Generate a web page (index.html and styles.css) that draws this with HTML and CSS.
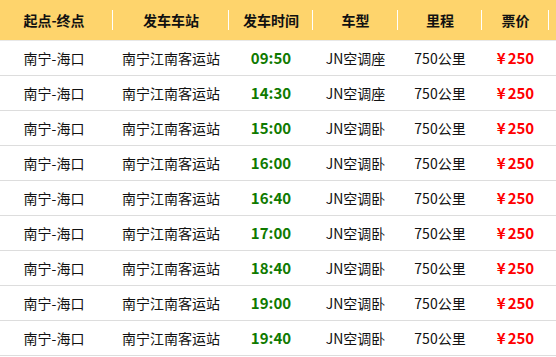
FILE: index.html
```html
<!DOCTYPE html>
<html lang="zh-CN">
<head>
<meta charset="utf-8">
<link rel="stylesheet" href="styles.css">
</head>
<body>
<div class="wrap">
<table class="sched">
  <colgroup>
    <col class="c1"><col class="c2"><col class="c3"><col class="c4"><col class="c5"><col class="c6"><col class="c7">
  </colgroup>
  <thead>
    <tr><th>起点-终点</th><th>发车车站</th><th>发车时间</th><th>车型</th><th>里程</th><th>票价</th><th></th></tr>
  </thead>
  <tbody>
    <tr><td>南宁-海口</td><td>南宁江南客运站</td><td class="time">09:50</td><td>JN空调座</td><td>750公里</td><td class="price"><span class="yen">¥</span>250</td><td></td></tr>
    <tr><td>南宁-海口</td><td>南宁江南客运站</td><td class="time">14:30</td><td>JN空调座</td><td>750公里</td><td class="price"><span class="yen">¥</span>250</td><td></td></tr>
    <tr><td>南宁-海口</td><td>南宁江南客运站</td><td class="time">15:00</td><td>JN空调卧</td><td>750公里</td><td class="price"><span class="yen">¥</span>250</td><td></td></tr>
    <tr><td>南宁-海口</td><td>南宁江南客运站</td><td class="time">16:00</td><td>JN空调卧</td><td>750公里</td><td class="price"><span class="yen">¥</span>250</td><td></td></tr>
    <tr><td>南宁-海口</td><td>南宁江南客运站</td><td class="time">16:40</td><td>JN空调卧</td><td>750公里</td><td class="price"><span class="yen">¥</span>250</td><td></td></tr>
    <tr><td>南宁-海口</td><td>南宁江南客运站</td><td class="time">17:00</td><td>JN空调卧</td><td>750公里</td><td class="price"><span class="yen">¥</span>250</td><td></td></tr>
    <tr><td>南宁-海口</td><td>南宁江南客运站</td><td class="time">18:40</td><td>JN空调卧</td><td>750公里</td><td class="price"><span class="yen">¥</span>250</td><td></td></tr>
    <tr><td>南宁-海口</td><td>南宁江南客运站</td><td class="time">19:00</td><td>JN空调卧</td><td>750公里</td><td class="price"><span class="yen">¥</span>250</td><td></td></tr>
    <tr><td>南宁-海口</td><td>南宁江南客运站</td><td class="time">19:40</td><td>JN空调卧</td><td>750公里</td><td class="price"><span class="yen">¥</span>250</td><td></td></tr>
  </tbody>
</table>
</div>
</body>
</html>
```

FILE: styles.css
```css
html, body {
  margin: 0;
  padding: 0;
  background: #ffffff;
}
body {
  font-family: "Noto Sans CJK SC", "Noto Sans", sans-serif;
  color: #111111;
  overflow: hidden;
}
.wrap {
  width: 556px;
  overflow: hidden;
}
.sched {
  width: 600px;
  table-layout: fixed;
  border-collapse: collapse;
  border-spacing: 0;
}
.c1 { width: 113px; }
.c2 { width: 116px; }
.c3 { width: 84px; }
.c4 { width: 85px; }
.c5 { width: 84px; }
.c6 { width: 67px; }
.c7 { width: 51px; }
.sched th {
  position: relative;
  height: 40px;
  padding: 0;
  background: #fed46c;
  font-size: 14px;
  font-weight: bold;
  color: #111111;
  text-align: center;
  border-bottom: 1px solid #e8e8e8;
  box-sizing: border-box;
}
.sched th::after {
  content: "";
  position: absolute;
  right: 0;
  top: 10px;
  width: 1px;
  height: 20px;
  background: #ffffff;
}
.sched th:last-child::after {
  display: none;
}
.sched th:first-child,
.sched td:first-child {
  padding-right: 5px;
}
.sched td {
  height: 35px;
  padding: 0;
  font-size: 14px;
  text-align: center;
  border-bottom: 1px solid #dddddd;
  box-sizing: border-box;
  white-space: nowrap;
}
.sched td.time {
  color: #0f7a00;
  font-weight: bold;
  font-size: 15px;
}
.sched td.price {
  color: #ff0000;
  font-weight: bold;
  font-size: 15px;
}
.yen {
  margin-right: 2px;
}
```
